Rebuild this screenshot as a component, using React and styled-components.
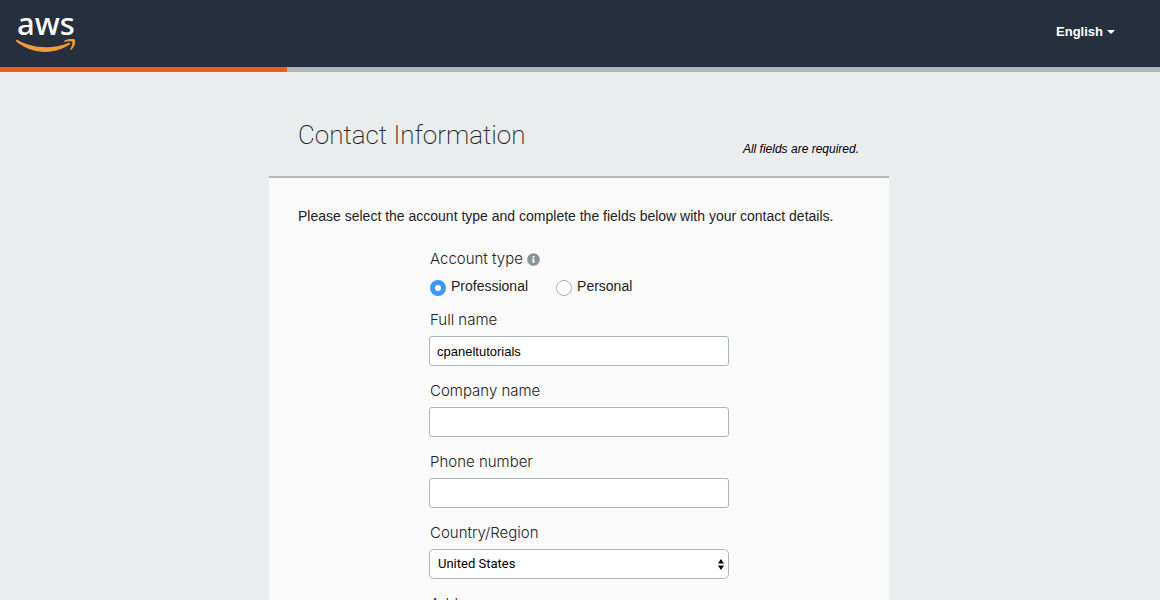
import React, { useId, useState } from "react";
import styled, { createGlobalStyle } from "styled-components";
import { FaInfoCircle } from "react-icons/fa";

const GlobalStyle = createGlobalStyle`
  *, *::before, *::after { box-sizing: border-box; }
  body {
    margin: 0;
    background: #e9eded;
    color: #222;
    font-family: "Liberation Sans", Arial, sans-serif;
    font-size: 14px;
    line-height: 20px;
  }
`;

const Header = styled.header`
  display: flex;
  align-items: center;
  justify-content: space-between;
  height: 67px;
  padding: 0 45px 3px 15px;
  background: #252f3e;
`;

const HomeLink = styled.a`
  display: block;
  line-height: 0;
`;

const LogoText = styled.text`
  font-family: "Noto Sans", "Open Sans", sans-serif;
  font-size: 31px;
  font-weight: 500;
  fill: #fff;
`;

const LanguageButton = styled.button`
  display: flex;
  align-items: center;
  gap: 4px;
  padding: 0;
  border: 0;
  background: none;
  color: #fff;
  font: bold 13px/20px "Liberation Sans", Arial, sans-serif;
  cursor: pointer;
`;

const Caret = styled.span`
  border: 4px solid transparent;
  border-top-color: currentColor;
  border-bottom: 0;
`;

const ProgressTrack = styled.div`
  height: 5px;
  background: #aab7b8;
`;

const ProgressFill = styled.div`
  width: ${({ $percent }) => $percent}%;
  height: 100%;
  background: #eb5f20;
`;

const Main = styled.main`
  max-width: 620px;
  margin: 0 auto;
`;

const Page = styled.div`
  padding: 0 16px 0 14px;
`;

const TitleRow = styled.div`
  display: flex;
  align-items: flex-end;
  justify-content: space-between;
  padding: 44px 30px 17px 29px;
`;

const Title = styled.h1`
  margin: 0;
  padding-bottom: 4px;
  color: #222;
  font-family: Roboto, "Liberation Sans", sans-serif;
  font-size: 26px;
  font-weight: 200;
  line-height: 39px;
`;

const RequiredNote = styled.em`
  color: #000;
  font-size: 12px;
`;

const Card = styled.form`
  padding: 28px 29px 40px;
  border-top: 2px solid #b7b7b7;
  background: #fafafa;
`;

const Intro = styled.p`
  margin: 0 0 23px;
`;

const Fields = styled.div`
  display: flex;
  flex-direction: column;
  gap: 15px;
  width: 300px;
  max-width: 100%;
  margin: 0 auto;
`;

const FieldBox = styled.div`
  display: flex;
  flex-direction: column;
  gap: 6px;
`;

const labelFont = `
  font-family: Inter, "Liberation Sans", sans-serif;
  font-size: 15px;
  font-weight: 300;
`;

const Label = styled.label`
  padding-left: 1px;
  ${labelFont}
`;

const RadioGroup = styled.fieldset`
  margin: 0 0 -1px;
  padding: 0;
  border: 0;
`;

const Legend = styled.legend`
  display: flex;
  align-items: center;
  gap: 4px;
  padding: 0 0 0 1px;
  ${labelFont}
`;

const InfoIcon = styled(FaInfoCircle)`
  color: #879596;
  font-size: 13px;
`;

const RadioRow = styled.div`
  display: flex;
  gap: 28px;
  padding: 7px 0 0 1px;
`;

const RadioLabel = styled.label`
  display: flex;
  align-items: center;
  gap: 5px;
  cursor: pointer;
`;

const Radio = styled.input`
  appearance: none;
  flex: none;
  width: 16px;
  height: 16px;
  margin: 3px 0 0;
  border: 1px solid #aaa;
  border-radius: 50%;
  background: #fff;

  &:checked {
    border: 5px solid #3b99fc;
  }
`;

const TextInput = styled.input`
  width: 100%;
  height: 30px;
  padding: 0 7px;
  border: 1px solid #aab7b8;
  border-radius: 3px;
  background: #fff;
  color: #000;
  font: 13px "Liberation Sans", Arial, sans-serif;
`;

const SelectBox = styled.div`
  display: grid;
  align-items: center;
  > * { grid-area: 1 / 1; }
`;

const Select = styled.select`
  appearance: none;
  width: 100%;
  height: 30px;
  padding: 0 20px 1px 8px;
  border: 1px solid #aab7b8;
  border-radius: 5px;
  background: #fff;
  color: #000;
  font: 13px Roboto, sans-serif;
`;

const SelectArrows = styled.svg`
  justify-self: end;
  margin-right: 5px;
  pointer-events: none;
`;

function AwsLogo() {
  return (
    <svg width="64" height="60" viewBox="0 -12 64 60" role="img" aria-label="aws">
      <LogoText x="2" y="21">aws</LogoText>
      <path
        d="M1.2 26.1Q0.6 26.9 1.6 27.8C10 34.7 20 37.9 30.6 37.9C39.5 37.9 48.2 35.1 54.6 30.6C55.8 29.5 54.8 28.4 53.4 29C46 31.9 38.2 33.3 31 33.3C20.4 33.3 10.6 30.7 2.6 26.1Q1.7 25.5 1.2 26.1Z"
        fill="#f79a33"
      />
      <path
        d="M58 25.1C55.2 24.6 51.7 25.1 49.4 26.7C48.7 27.3 48.8 27.9 49.6 27.8C52.2 27.5 56.3 26.9 57.2 28C58 29.2 56.4 32.7 55.3 35.2C55 36 55.6 36.3 56.3 35.7C59.2 33.3 60.4 29.5 60.2 27C60.1 25.7 59.6 25.4 58 25.1Z"
        fill="#f79a33"
      />
    </svg>
  );
}

function TextField({ label, defaultValue = "" }) {
  const id = useId();
  return (
    <FieldBox>
      <Label htmlFor={id}>{label}</Label>
      <TextInput id={id} type="text" defaultValue={defaultValue} />
    </FieldBox>
  );
}

function SelectField({ label, options }) {
  const id = useId();
  return (
    <FieldBox>
      <Label htmlFor={id}>{label}</Label>
      <SelectBox>
        <Select id={id}>
          {options.map((option) => (
            <option key={option}>{option}</option>
          ))}
        </Select>
        <SelectArrows width="6" height="11" viewBox="0 0 6 11" aria-hidden="true">
          <path d="M3 0 6 4.6H0ZM3 11 0 6.4h6Z" fill="#000" />
        </SelectArrows>
      </SelectBox>
    </FieldBox>
  );
}

function AccountType() {
  const [selected, setSelected] = useState("Professional");
  return (
    <RadioGroup>
      <Legend>
        Account type <InfoIcon aria-hidden="true" />
      </Legend>
      <RadioRow>
        {["Professional", "Personal"].map((type) => (
          <RadioLabel key={type}>
            <Radio
              type="radio"
              name="accountType"
              checked={selected === type}
              onChange={() => setSelected(type)}
            />
            {type}
          </RadioLabel>
        ))}
      </RadioRow>
    </RadioGroup>
  );
}

export default function App() {
  return (
    <>
      <GlobalStyle />
      <Header>
        <HomeLink href="#">
          <AwsLogo />
        </HomeLink>
        <LanguageButton type="button">
          English <Caret />
        </LanguageButton>
      </Header>
      <ProgressTrack>
        <ProgressFill $percent={24.75} />
      </ProgressTrack>
      <Page>
        <Main>
          <TitleRow>
            <Title>Contact Information</Title>
            <RequiredNote>All fields are required.</RequiredNote>
          </TitleRow>
          <Card>
            <Intro>
              Please select the account type and complete the fields below with your contact details.
            </Intro>
            <Fields>
              <AccountType />
              <TextField label="Full name" defaultValue="cpaneltutorials" />
              <TextField label="Company name" />
              <TextField label="Phone number" />
              <SelectField label="Country/Region" options={["United States"]} />
              <TextField label="Address" />
            </Fields>
          </Card>
        </Main>
      </Page>
    </>
  );
}
